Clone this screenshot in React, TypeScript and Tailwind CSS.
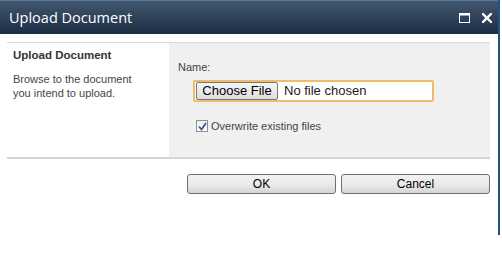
export default function App() {
  return (
    <div className="w-[502px] h-[264px] bg-white overflow-hidden" style={{ fontFamily: '"Liberation Sans", Arial, sans-serif' }}>
      <div className="w-[500px] h-[235px] border-r-2 border-[#1c5587] flex flex-col">
        {/* title bar */}
        <div className="h-[34px] flex items-center justify-between pl-[9px] pr-[6px] bg-gradient-to-b from-[#425770] to-[#1c2d43] border-t border-[#5a7894]">
          <span className="text-white text-[14.5px]" style={{ fontFamily: '"Open Sans", "Liberation Sans", sans-serif' }}>
            Upload Document
          </span>
          <div className="flex items-center gap-[12px]">
            <svg width="11" height="10" viewBox="0 0 11 10">
              <rect x="0.5" y="0.5" width="10" height="9" fill="none" stroke="#fff" strokeWidth="1" />
              <rect x="0.5" y="0.5" width="10" height="2" fill="#fff" />
            </svg>
            <svg width="10" height="10" viewBox="0 0 10 10">
              <path d="M1 1 L9 9 M9 1 L1 9" stroke="#fff" strokeWidth="2.4" strokeLinecap="square" />
            </svg>
          </div>
        </div>

        <div className="pl-[7px] pr-[8px] pt-[8px]">
          <div className="border-t border-[#d9d9d9] border-b-2 border-b-[#d6d6d6] flex h-[117px]">
            <div className="w-[162px] pl-[6px] pt-[5px] text-[11px] text-[#444]">
              <div className="font-bold text-[11.5px] text-[#333] leading-[15px]">Upload Document</div>
              <div className="mt-[9px] leading-[14px]">
                Browse to the document
                <br />
                you intend to upload.
              </div>
            </div>
            <div className="flex-1 bg-[#f0f0f0] pl-[9px] pt-[17px] text-[11px] text-[#444]">
              <div className="leading-[14px]">Name:</div>
              <div className="ml-[15px] mt-[6px] w-[241px] h-[22px] border-2 border-[#ecbd6c] rounded-[2px] bg-white flex items-center pl-[1px]">
                <div className="h-[18px] w-[82px] justify-center flex items-center border border-[#767676] rounded-[2px] bg-gradient-to-b from-[#f6f6f6] to-[#dddddd] text-[13px] text-black">
                  Choose File
                </div>
                <span className="ml-[6px] text-[13px] text-[#222]">No file chosen</span>
              </div>
              <div className="ml-[18px] mt-[17px] flex items-center gap-[3px]">
                <div className="w-[12px] h-[12px] border border-[#8e8f8f] bg-gradient-to-b from-[#eeeeee] to-[#ffffff] flex items-center justify-center">
                  <svg width="9" height="9" viewBox="0 0 9 9">
                    <path d="M1 4.5 L3.5 7.5 L8 1" fill="none" stroke="#3a5b9a" strokeWidth="1.8" />
                  </svg>
                </div>
                <span className="leading-[14px]">Overwrite existing files</span>
              </div>
            </div>
          </div>
        </div>

        <div className="flex gap-[5px] pl-[187px] mt-[15px]">
          <button className="w-[149px] h-[20px] border border-[#707070] rounded-[3px] bg-gradient-to-b from-[#f2f2f2] via-[#ebebeb] to-[#d5d5d5] text-[12px] text-black">
            OK
          </button>
          <button className="w-[149px] h-[20px] border border-[#707070] rounded-[3px] bg-gradient-to-b from-[#f2f2f2] via-[#ebebeb] to-[#d5d5d5] text-[12px] text-black">
            Cancel
          </button>
        </div>
      </div>
    </div>
  );
}
